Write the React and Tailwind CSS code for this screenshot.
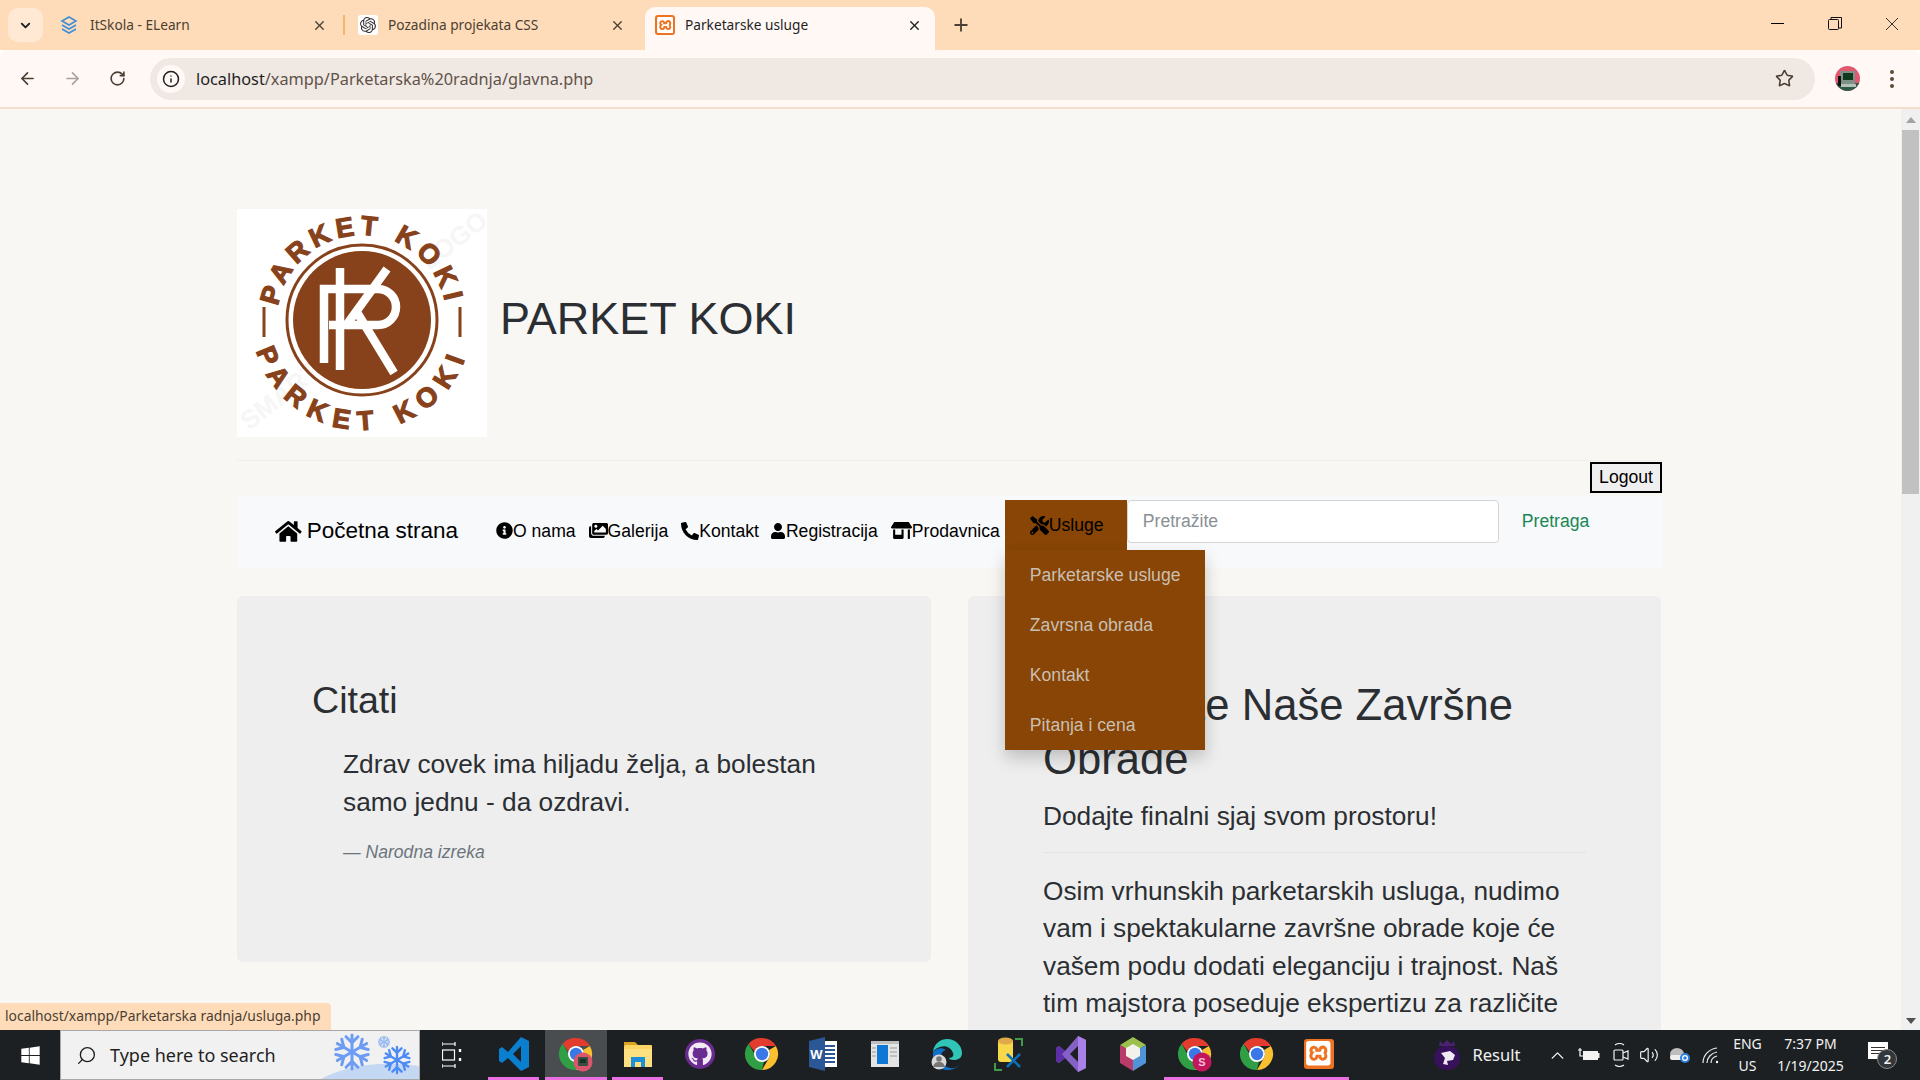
import React from "react";
import { ChevronDown, X, Plus, ArrowLeft, ArrowRight, RotateCw, Info, Star, ChevronUp, Search, Volume2 } from "lucide-react";
import { FaHome, FaInfoCircle, FaImages, FaPhoneAlt, FaUser, FaStoreAlt, FaTools, FaGithub, FaWindows } from "react-icons/fa";
import { SiOpenai, SiXampp } from "react-icons/si";

const SANS = "font-['Liberation_Sans',Arial,sans-serif]";
const UI = "font-['Noto_Sans','Open_Sans',sans-serif]";

function Chrome({ size = 36, badge }) {
  return (
    <svg width={size} height={size} viewBox="0 0 36 36">
      <path d="M18 2a16 16 0 0 1 13.9 8H18a8 8 0 0 0-7.6 5.4L4.6 7.8A16 16 0 0 1 18 2z" fill="#e33b2e" />
      <path d="M31.9 10A16 16 0 0 1 18 34l6.9-12A8 8 0 0 0 25 14l6.9-4z" fill="#fbc02d" />
      <path d="M4.6 7.8l6.9 12a8 8 0 0 0 8.5 6L18 34A16 16 0 0 1 4.6 7.8z" fill="#2f9e44" />
      <circle cx="18" cy="18" r="8" fill="#fff" />
      <circle cx="18" cy="18" r="6.2" fill="#3b78e7" />
      {badge === "s" && <circle cx="25" cy="26" r="9.5" fill="#c2185b" />}
      {badge === "s" && <text x="25" y="30" textAnchor="middle" fontSize="11" fontWeight="700" fill="#f6c1d8" fontFamily="Liberation Sans">S</text>}
      {badge === "p" && <circle cx="25" cy="26" r="9.5" fill="#d9566c" />}
      {badge === "p" && <rect x="20" y="21" width="10" height="9" rx="1" fill="#3a4a44" />}
      {badge === "p" && <rect x="22" y="23" width="6" height="4" fill="#17341f" />}
    </svg>
  );
}

function VSCode() {
  return (
    <svg width="32" height="36" viewBox="0 0 32 36">
      <path d="M23 1l8 4v26l-8 4-13-13-6 5-3-2V13l3-2 6 5zM23 10l-8 8 8 8z" fill="#0a7fd0" fillRule="evenodd" />
    </svg>
  );
}

function VS() {
  return (
    <svg width="32" height="38" viewBox="0 0 32 38">
      <path d="M23 1l8 4v28l-8 4-13-14-6 5-3-2V13l3-2 6 5zM23 11l-8 8 8 8z" fill="#8661c5" fillRule="evenodd" />
      <path d="M23 1l8 4v28l-8 4z" fill="#a97fe8" />
      <path d="M1 13l3-2 6 5-3 3 3 4-6 5-3-2z" fill="#5d2fa6" />
    </svg>
  );
}

function Files() {
  return (
    <svg width="30" height="30" viewBox="0 0 30 30">
      <path d="M1 3h11l3 3H1z" fill="#d9a520" />
      <rect x="1" y="6" width="28" height="22" rx="1" fill="#fcd462" />
      <rect x="1" y="10" width="28" height="18" fill="#fde07f" />
      <path d="M8 28v-10h14v10h-4v-5h-6v5z" fill="#1e90d8" />
    </svg>
  );
}

function Word() {
  return (
    <svg width="30" height="36" viewBox="0 0 30 36">
      <rect x="12" y="5" width="17" height="26" fill="#fff" />
      <path d="M16 10h11M16 14h11M16 18h11M16 22h11M16 26h11" stroke="#2b5797" strokeWidth="2" />
      <path d="M1 5L17 1v34L1 31z" fill="#2b5797" />
      <text x="8.5" y="23" textAnchor="middle" fontSize="13" fontWeight="700" fill="#fff" fontFamily="Liberation Sans">W</text>
    </svg>
  );
}

function Window() {
  return (
    <svg width="28" height="28" viewBox="0 0 28 28">
      <rect x="0" y="1" width="28" height="26" fill="#e4e4e4" />
      <rect x="0" y="1" width="28" height="3" fill="#bfbfbf" />
      <rect x="6" y="5" width="11" height="19" fill="#0f78d4" />
      <path d="M19 8h7M19 12h7M19 16h7M1 8h4M1 12h4M1 16h4" stroke="#9a9a9a" strokeWidth="1" />
    </svg>
  );
}

function Edge() {
  return (
    <svg width="32" height="32" viewBox="0 0 32 32">
      <path d="M2 14C3 5 10 1 16 1c9 0 15 7 15 14 0 5-4 7-8 7-3 0-5-1-5-2 4 0 5-3 4-5C20 9 14 7 9 9 5 10 3 12 2 14z" fill="#2fc6b8" />
      <path d="M2 14c3-4 9-5 13-2-4 1-6 5-5 10 1 5 7 9 13 8 2 0 5-2 6-4-2 4-8 6-13 6C8 32 1 24 2 14z" fill="#0f6fc6" />
      <circle cx="8" cy="24" r="7.5" fill="#d9d9d9" />
      <circle cx="8" cy="21" r="2.8" fill="#777" />
      <path d="M2 29c1-4 3-5 6-5s5 1 6 5z" fill="#777" />
    </svg>
  );
}

function DbTool() {
  return (
    <svg width="30" height="36" viewBox="0 0 30 36">
      <rect x="4" y="3" width="15" height="23" rx="3" fill="#f6d84a" />
      <ellipse cx="11.5" cy="5" rx="7.5" ry="3.5" fill="#e0a94a" />
      <path d="M21 3h7v7M1 27v7h7" fill="none" stroke="#3f9a4a" strokeWidth="2" />
      <path d="M13 18l13 13M26 18L13 31" stroke="#0d6fb8" strokeWidth="2.6" />
    </svg>
  );
}

function Gem() {
  return (
    <svg width="28" height="36" viewBox="0 0 28 36">
      <path d="M14 1l13 8L14 17 1 9z" fill="#9cbf4d" />
      <path d="M1 9l13 8v18L1 27z" fill="#b83b6a" />
      <path d="M27 9L14 17v18l13-8z" fill="#4f94d8" />
      <path d="M14 8l7 4v8l-7 4-7-4v-8z" fill="#f2f2ea" />
    </svg>
  );
}

function Xampp({ size = 30 }) {
  return (
    <span className="flex items-center justify-center rounded-[3px] bg-[#ee7320]" style={{ width: size, height: size }}>
      <SiXampp size={size * 0.82} color="#fff" />
    </span>
  );
}

function Lion() {
  return (
    <svg width="30" height="32" viewBox="0 0 30 32" className="shrink-0">
      <path d="M7 7L8 2l3 3 4-4 4 4 3-3 1 5z" fill="#4a2273" />
      <path d="M15 7c8 0 13 5 13 12 0 7-5 12-13 12S2 26 2 19C2 12 7 7 15 7z" fill="#38115c" />
      <path d="M9 14l9-2 5 4-2 5-6 1 1 4-5-1 2-6z" fill="#efeaf3" />
    </svg>
  );
}

function Avatar() {
  return (
    <svg width="25" height="25" viewBox="0 0 25 25" className="shrink-0">
      <defs>
        <clipPath id="avatarClip"><circle cx="12.5" cy="12.5" r="12.5" /></clipPath>
      </defs>
      <g clipPath="url(#avatarClip)">
        <rect width="25" height="25" fill="#e0596f" />
        <rect y="17" width="25" height="8" fill="#2f5a47" />
        <rect x="5" y="5" width="15" height="13" fill="#7f9088" />
        <rect x="8" y="7" width="10" height="7" fill="#0f3a1e" />
        <rect x="3" y="10" width="3" height="10" fill="#111" />
        <rect x="6" y="18" width="15" height="3" fill="#b5c1b8" />
      </g>
    </svg>
  );
}

function Snow() {
  const flake = (cx, cy, r, c, w) => (
    <g stroke={c} strokeWidth={w} strokeLinecap="round">
      {[0, 60, 120].map((a) => (
        <g key={a} transform={`rotate(${a} ${cx} ${cy})`}>
          <path d={`M${cx} ${cy - r}V${cy + r}`} />
          <path d={`M${cx - r * 0.35} ${cy - r * 0.9}L${cx} ${cy - r * 0.55}L${cx + r * 0.35} ${cy - r * 0.9}`} fill="none" />
          <path d={`M${cx - r * 0.35} ${cy + r * 0.9}L${cx} ${cy + r * 0.55}L${cx + r * 0.35} ${cy + r * 0.9}`} fill="none" />
        </g>
      ))}
    </g>
  );
  return (
    <svg width="100" height="50" viewBox="0 0 100 50" className="shrink-0">
      <path d="M0 50C25 36 60 30 100 36V50z" fill="#c5d8f3" />
      {flake(33, 22, 17, "#6d9cf5", 3)}
      {flake(65, 12, 5.5, "#9dbcf0", 1.5)}
      {flake(78, 30, 13, "#4d8cf5", 2.4)}
    </svg>
  );
}

function Logo() {
  return (
    <svg width="250" height="228" viewBox="0 0 250 228" className="shrink-0 block">
      <rect width="250" height="228" fill="#fff" />
      <text x="0" y="0" transform="translate(12 222) rotate(-38)" fontSize="26" fontWeight="700" fill="#f6f6f6" fontFamily="Liberation Sans">SMART</text>
      <text x="0" y="0" transform="translate(192 62) rotate(-38)" fontSize="26" fontWeight="700" fill="#f6f6f6" fontFamily="Liberation Sans">LOGO</text>
      <defs>
        <path id="arcTop" d="M40 111A85 85 0 0 1 210 111" />
        <path id="arcBot" d="M15 111A110 110 0 0 0 235 111" />
      </defs>
      <circle cx="125" cy="111" r="75" fill="none" stroke="#87421b" strokeWidth="3" />
      <circle cx="125" cy="111" r="69" fill="#87421b" />
      <text fontSize="27" fontWeight="700" fill="#87421b" stroke="#87421b" strokeWidth="1.2" fontFamily="Liberation Sans" letterSpacing="5">
        <textPath href="#arcTop" startOffset="50%" textAnchor="middle">PARKET KOKI</textPath>
      </text>
      <text fontSize="27" fontWeight="700" fill="#87421b" stroke="#87421b" strokeWidth="1.2" fontFamily="Liberation Sans" letterSpacing="9">
        <textPath href="#arcBot" startOffset="50%" textAnchor="middle">PARKET KOKI</textPath>
      </text>
      <path d="M27 98V128M223 98V128" stroke="#87421b" strokeWidth="3" />
      <g fill="none" stroke="#fff" strokeWidth="8.5">
        <path d="M87 154V80H141A18 18 0 0 1 141 116H92" />
        <path d="M103 59V161" />
        <path d="M150 60L108 118" />
        <path d="M118 100L157 164" />
      </g>
    </svg>
  );
}

function NavLink({ icon, children, size = 18, className = "" }) {
  const I = icon;
  return (
    <a className={`flex items-center whitespace-nowrap text-black ${className}`}>
      <I size={size} />
      <span>{children}</span>
    </a>
  );
}

function Tab({ fav, title, active }) {
  return (
    <div className={`flex h-[43px] shrink-0 items-center pb-[7px] ${active ? "ml-[4px] w-[290px] rounded-t-[10px] bg-[#fff8f5] pl-[10px] pr-[13px] text-[#1f1f1f]" : "w-[298px] pl-[15px] pr-[16px] text-[#4b3f33]"}`}>
      <span className="flex w-[30px] shrink-0 items-center">{fav}</span>
      <span className={`flex-1 truncate text-[13.7px] ${UI}`}>{title}</span>
      <X size={15} strokeWidth={2.2} className="shrink-0" />
    </div>
  );
}

function Cell({ children, line, active }) {
  return (
    <div className={`flex h-full w-[61.9px] shrink-0 flex-col items-center ${active ? "bg-[#4a4d50]" : ""}`}>
      <div className="flex flex-1 items-center justify-center">{children}</div>
      <div className={`h-[3px] ${line === "full" ? "w-full bg-[#e96fe2]" : line ? "w-[51px] bg-[#e96fe2]" : ""}`} />
    </div>
  );
}

export default function App() {
  return (
    <div className={`flex h-[1080px] w-[1920px] flex-col overflow-hidden ${SANS}`}>
      {/* tab strip */}
      <div className="flex h-[50px] shrink-0 items-end bg-[#ffdcb9]">
        <div className="mb-[8px] ml-[8px] mr-[2px] flex h-[34px] w-[35px] items-center justify-center rounded-[10px] bg-[#ffe9d5] text-[#1f1f1f]">
          <ChevronDown size={15} strokeWidth={3} />
        </div>
        <Tab
          title="ItSkola - ELearn"
          fav={
            <svg width="18" height="18" viewBox="0 0 18 18" fill="none" stroke="#3f8ed8" strokeWidth="1.6">
              <path d="M9 1l7 4-7 4-7-4z" />
              <path d="M2 9l7 4 7-4" />
              <path d="M2 13l7 4 7-4" />
            </svg>
          }
        />
        <div className="mb-[15px] mr-[-2px] h-[20px] w-[2px] bg-[#f5b76e]" />
        <Tab
          title="Pozadina projekata CSS"
          fav={
            <span className="flex h-[20px] w-[20px] items-center justify-center rounded-[3px] bg-white">
              <SiOpenai size={16} color="#333" />
            </span>
          }
        />
        <Tab active title="Parketarske usluge" fav={<Xampp size={20} />} />
        <div className="mb-[15px] ml-[16px] text-[#4b3f33]">
          <Plus size={20} strokeWidth={2.2} />
        </div>
        <div className="flex-1" />
        <div className="flex h-full items-start text-[#222]">
          <div className="flex h-[46px] w-[57px] items-center justify-center">
            <div className="h-px w-[13px] bg-black" />
          </div>
          <div className="flex h-[48px] w-[57px] items-center justify-center">
            <svg width="14" height="14" viewBox="0 0 14 14" fill="none" stroke="#111" strokeWidth="1">
              <rect x="0.5" y="2.5" width="10" height="10" rx="1" />
              <path d="M3 2.5V0.5H13.5V11H10.5" />
            </svg>
          </div>
          <div className="flex h-[48px] w-[57px] items-center justify-center">
            <svg width="14" height="14" viewBox="0 0 14 14" stroke="#333" strokeWidth="1">
              <path d="M1 1L13 13M13 1L1 13" />
            </svg>
          </div>
        </div>
      </div>

      {/* toolbar */}
      <div className="flex h-[57px] shrink-0 items-center rounded-t-[8px] bg-[#fff8f5] text-[#4b3f33]">
        <div className="flex w-[150px] items-center pl-[18px]">
          <ArrowLeft size={19} strokeWidth={2.1} />
          <ArrowRight size={19} strokeWidth={2.1} className="ml-[26px] text-[#a9a29c]" />
          <RotateCw size={17} strokeWidth={2.3} className="ml-[27px]" />
        </div>
        <div className="flex h-[42px] w-[1665px] items-center rounded-full bg-[#f0e8e3] pl-[7px]">
          <span className="flex h-[28px] w-[28px] items-center justify-center rounded-full bg-[#fff8f5] text-[#1f1f1f]">
            <Info size={18} strokeWidth={2} />
          </span>
          <span className={`ml-[11px] flex-1 pt-[2px] text-[16.3px] ${UI} text-[#5f5349]`}>
            <span className="text-[#1f1f1f]">localhost</span>/xampp/Parketarska%20radnja/glavna.php
          </span>
          <Star size={19} strokeWidth={2} className="mr-[21px] text-[#4b3f33]" />
        </div>
        <div className="ml-[20px]"><Avatar /></div>
        <div className="ml-[30px] flex flex-col gap-[3px]">
          <span className="h-[4px] w-[4px] rounded-full bg-[#5e4a36]" />
          <span className="h-[4px] w-[4px] rounded-full bg-[#5e4a36]" />
          <span className="h-[4px] w-[4px] rounded-full bg-[#5e4a36]" />
        </div>
      </div>
      <div className="h-[2px] shrink-0 bg-[#f3ddcb]" />

      {/* viewport */}
      <div className="relative flex min-h-0 flex-1 bg-[#f8f7f3]">
        <div className="min-w-0 flex-1 overflow-hidden pl-[237px] pr-[239px] pt-[100px] text-[#2b2e32]">
          <div className="flex items-center">
            <Logo />
            <h1 className="ml-[13px] mt-[-10px] text-[45px] leading-[53px]">PARKET KOKI</h1>
          </div>
          <div className="mt-[23px] border-t border-[#efeeea]" />
          <div className="mt-[1px] flex h-[34px] justify-end">
            <button className="h-[31px] w-[72px] border-2 border-black bg-[#efefef] text-[17.6px] leading-none text-black">Logout</button>
          </div>
          <nav className="flex h-[72px] items-center bg-[#f8f9fa] pl-[38px] text-[17.6px]">
            <a className="mr-[38px] flex w-[183px] items-center gap-[5px] whitespace-nowrap pb-[2px] text-[22.5px] text-black">
              <FaHome size={27} />
              <span>Početna strana</span>
            </a>
            <div className="flex items-center gap-[13px] pb-[2px]">
              <NavLink icon={FaInfoCircle} size={17}>O nama</NavLink>
              <NavLink icon={FaImages} size={19}>Galerija</NavLink>
              <NavLink icon={FaPhoneAlt}>Kontakt</NavLink>
              <NavLink icon={FaUser} size={16} className="ml-[-2px]">Registracija</NavLink>
              <NavLink icon={FaStoreAlt} size={21}>Prodavnica</NavLink>
            </div>
            <div className="relative mb-[14px] ml-[5px] h-[50px] w-[122px] bg-[#884505]">
              <div className="flex h-full items-center pl-[25px] text-black">
                <FaTools size={19} />
                <span>Usluge</span>
              </div>
              <div className="absolute left-0 top-[50px] z-10 w-[200px] bg-[#884505] pl-[25px] text-[#c9bfb2] shadow-[0_8px_16px_rgba(0,0,0,0.2)]">
                <div className="flex h-[50px] items-center whitespace-nowrap">Parketarske usluge</div>
                <div className="flex h-[50px] items-center whitespace-nowrap">Zavrsna obrada</div>
                <div className="flex h-[50px] items-center whitespace-nowrap">Kontakt</div>
                <div className="flex h-[50px] items-center whitespace-nowrap">Pitanja i cena</div>
              </div>
            </div>
            <div className="mb-[21px] flex h-[43px] w-[372px] items-center rounded-[4px] border border-[#d5d5d5] bg-white pl-[15px] text-[#8a8f94]">
              Pretražite
            </div>
            <span className="mb-[21px] ml-[23px] text-[#198754]">Pretraga</span>
          </nav>
          <div className="mt-[28px] grid grid-cols-[694px_693px] items-start gap-[37px]">
            <section className="h-[366px] rounded-[6px] bg-[#eeeeee] px-[75px] pt-[81px]">
              <h2 className="text-[37.6px] leading-[46px]">Citati</h2>
              <blockquote className="ml-[31px] mt-[22px] text-[26.25px] leading-[38px]">
                Zdrav covek ima hiljadu želja, a bolestan samo jednu - da ozdravi.
              </blockquote>
              <p className="ml-[31px] mt-[18px] text-[17.6px] italic text-[#6c757d]">— Narodna izreka</p>
            </section>
            <section className="h-[700px] rounded-[6px] bg-[#eeeeee] px-[75px] pt-[83px]">
              <h2 className="text-[43.6px] leading-[53.5px]">Pronađite Naše Završne Obrade</h2>
              <p className="mt-[10px] text-[26.25px] leading-[40px]">Dodajte finalni sjaj svom prostoru!</p>
              <div className="mt-[16px] border-t border-[#e2e2e2]" />
              <p className="mt-[20px] text-[26.25px] leading-[37.4px]">
                Osim vrhunskih parketarskih usluga, nudimo vam i spektakularne završne obrade koje će vašem podu dodati eleganciju i trajnost. Naš tim majstora poseduje ekspertizu za različite
              </p>
            </section>
          </div>
        </div>
        <div className="flex w-[19px] shrink-0 flex-col items-center bg-[#f0f0f0]">
          <div className="mt-[8px] h-0 w-0 border-x-[5px] border-b-[6px] border-x-transparent border-b-[#a3a3a3]" />
          <div className="mt-[7px] h-[364px] w-[17px] bg-[#c1c1c1]" />
          <div className="flex-1" />
          <div className="mb-[6px] h-0 w-0 border-x-[5px] border-t-[6px] border-x-transparent border-t-[#505050]" />
        </div>
        <div className={`absolute bottom-0 left-0 flex h-[27px] w-[331px] items-center whitespace-nowrap rounded-tr-[4px] bg-[#ffdcb9] pl-[5px] text-[13.9px] text-[#4b3f33] ${UI}`}>
          localhost/xampp/Parketarska radnja/usluga.php
        </div>
      </div>

      {/* taskbar */}
      <div className={`flex h-[50px] shrink-0 items-center bg-[#1c2023] text-[#f2f2f2] ${UI}`}>
        <div className="flex h-full w-[60px] items-center justify-center">
          <FaWindows size={21} color="#fff" />
        </div>
        <div className="flex h-full w-[360px] items-center overflow-hidden border border-[#a8a8a8] bg-[#f1f1f1] pl-[15px] text-[#1f1f1f]">
          <Search size={21} strokeWidth={1.5} className="scale-x-[-1]" />
          <span className="ml-[13px] flex-1 text-[18px]">Type here to search</span>
          <Snow />
        </div>
        <div className="flex h-full w-[63px] items-center justify-center">
          <svg width="20" height="26" viewBox="0 0 20 26" fill="none" stroke="#fff" strokeWidth="1.2">
            <path d="M0 2h13M0 24h13M13 0v4M0 0v4M13 22v4M0 22v4" />
            <rect x="0.5" y="8" width="12" height="10" />
            <path d="M18 7v3M18 16v3" strokeWidth="2.4" />
          </svg>
        </div>
        <Cell line><VSCode /></Cell>
        <Cell line="full" active><Chrome badge="p" size={36} /></Cell>
        <Cell line><Files /></Cell>
        <Cell>
          <span className="flex h-[30px] w-[30px] items-center justify-center rounded-full bg-[#6b2c91]">
            <FaGithub size={24} color="#f2eaf5" />
          </span>
        </Cell>
        <Cell><Chrome /></Cell>
        <Cell><Word /></Cell>
        <Cell><Window /></Cell>
        <Cell><Edge /></Cell>
        <Cell><DbTool /></Cell>
        <Cell><VS /></Cell>
        <Cell><Gem /></Cell>
        <Cell line="full"><Chrome badge="s" /></Cell>
        <Cell line="full"><Chrome /></Cell>
        <Cell line="full"><Xampp size={30} /></Cell>
        <div className="ml-[83px]"><Lion /></div>
        <span className="ml-[10px] w-[75px] text-[16.5px]">Result</span>
        <ChevronUp size={21} strokeWidth={1.6} className="shrink-0" />
        <svg width="22" height="14" viewBox="0 0 22 14" className="ml-[10px] shrink-0">
          <path d="M0 2h4M2 0v4M2 4v4h3" stroke="#fff" fill="none" strokeWidth="1.2" />
          <rect x="5" y="3" width="15" height="9" fill="#f2f2f2" />
          <rect x="20" y="5" width="1.5" height="5" fill="#f2f2f2" />
        </svg>
        <svg width="16" height="24" viewBox="0 0 16 24" fill="none" stroke="#f2f2f2" strokeWidth="1.2" className="ml-[13px] shrink-0">
          <rect x="1" y="7" width="9" height="10" rx="1" />
          <path d="M10 10l5-2v8l-5-2M2 2c3-2 6-2 9 0M2 22c3 2 6 2 9 0" />
        </svg>
        <Volume2 size={20} strokeWidth={1.4} className="ml-[10px] shrink-0" />
        <svg width="22" height="18" viewBox="0 0 22 18" className="ml-[10px] shrink-0">
          <ellipse cx="8" cy="8" rx="7" ry="6" fill="#bdbdbd" />
          <rect x="1" y="9" width="13" height="5" rx="2" fill="#eee" />
          <circle cx="16" cy="12" r="5" fill="#2d7fe0" />
          <circle cx="16" cy="12" r="2.4" fill="none" stroke="#fff" strokeWidth="1.2" />
        </svg>
        <svg width="17" height="17" viewBox="0 0 17 17" fill="none" stroke="#e8e8e8" strokeWidth="1.2" className="ml-[11px] shrink-0">
          <path d="M1 16C1 8 7 2 15 1M5 16c0-5 4-10 10-11M9 16c0-3 2-6 6-7" />
          <circle cx="15" cy="15" r="1.2" fill="#fff" stroke="none" />
        </svg>
        <div className="ml-[12px] w-[32px] text-center text-[14px] leading-[22px]">
          <div>ENG</div>
          <div>US</div>
        </div>
        <div className="ml-[11px] w-[72px] text-center text-[14px] leading-[22px]">
          <div>7:37 PM</div>
          <div>1/19/2025</div>
        </div>
        <div className="relative ml-[22px] h-[26px] w-[22px]">
          <div className="flex h-[17px] w-[20px] flex-col justify-center gap-[2px] bg-white px-[3px]">
            <span className="h-px bg-[#333]" />
            <span className="h-px bg-[#333]" />
            <span className="h-px bg-[#333]" />
          </div>
          <span className="absolute left-[9px] top-[7px] flex h-[20px] w-[20px] items-center justify-center rounded-full border border-[#888] bg-[#33373a] text-[13px] font-semibold leading-none">2</span>
        </div>
      </div>
    </div>
  );
}
